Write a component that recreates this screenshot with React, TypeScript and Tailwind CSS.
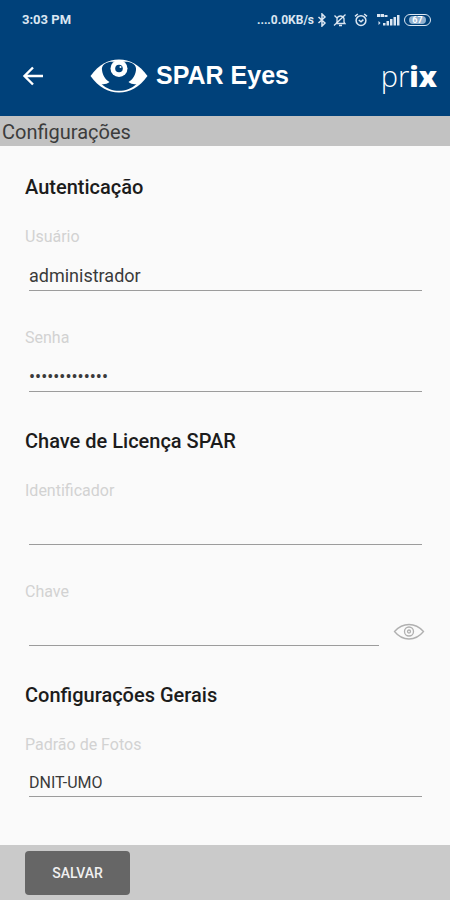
import React, { useState } from 'react';

const inputClass =
  'block h-[42px] w-full appearance-none rounded-none border-b border-[#9c9c9c] bg-transparent pt-3 text-lg leading-6 text-[#3a3a3a] outline-none';

interface FieldProps {
  id: string;
  label: string;
  children: React.ReactNode;
}

const Field: React.FC<FieldProps> = ({ id, label, children }) => (
  <div>
    <label htmlFor={id} className="block text-base leading-6 text-[#d2d2d2]">
      {label}
    </label>
    <div className="mr-[3px] ml-1">{children}</div>
  </div>
);

const SectionTitle: React.FC<{ children: React.ReactNode }> = ({ children }) => (
  <h2 className="mb-[26px] text-xl leading-6 font-medium text-[#1c1c1c]">{children}</h2>
);

const StatusBar: React.FC = () => (
  <div className="flex h-10 items-center justify-between pr-[19px] pl-[22px] text-[#dbe6f2]">
    <span className="text-[13px] font-bold">3:03 PM</span>
    <div className="flex items-center">
      <span className="text-xs font-bold">....0.0KB/s</span>

      {/* Bluetooth */}
      <svg viewBox="0 0 10 14" className="ml-[3px] h-[14px] w-[10px]" fill="none" stroke="currentColor" strokeWidth="1.5">
        <path d="M1.5 4 L8 10 L5 13 V1 L8 4 L1.5 10" />
      </svg>

      {/* Muted bell */}
      <svg viewBox="0 0 14 14" className="ml-1.5 h-[14px] w-[14px]" fill="none" stroke="currentColor" strokeWidth="1.3">
        <path d="M3 10.5 H12 L11 9 V5.5 A3.7 3.7 0 0 0 4 5.5 V9 Z M6 12.5 H9 M1.5 2.5 L4 5 M1 12.5 L12.5 1.5" />
      </svg>

      {/* Alarm clock */}
      <svg viewBox="0 0 14 14" className="ml-[7px] h-[14px] w-[14px]" fill="none" stroke="currentColor" strokeWidth="1.5">
        <circle cx="7" cy="7.6" r="4.9" />
        <path d="M1 3.4 L3.8 1 M13 3.4 L10.2 1 M4.8 7 L7 8.8 L9.4 6.6" />
      </svg>

      {/* Signal */}
      <svg viewBox="0 0 24 14" className="ml-2 h-[14px] w-6" fill="currentColor">
        <path d="M1 1 H4.5 V4 H1 Z M5 1 H8 V4 H5 Z M8.5 2 H11.5 V4 H8.5 Z M2.5 8 L4.5 10 L2.5 12 Z" />
        <path d="M7 10 H9.5 V12.5 H7 Z M10.5 8 H13 V12.5 H10.5 Z M14 6 H16.5 V12.5 H14 Z M17.5 4 H20 V12.5 H17.5 Z M21 2 H23.5 V12.5 H21 Z" />
      </svg>

      {/* Battery */}
      <div className="ml-1 flex h-3 w-[27px] items-center justify-center rounded-full border border-[#dbe6f2]">
        <span className="rounded-sm bg-[#8fb0cf] px-[3px] text-[9px] leading-[8px] font-bold text-white">67</span>
      </div>
    </div>
  </div>
);

const EyeLogo: React.FC = () => (
  <svg viewBox="0 0 58 34" className="h-[34px] w-[58px]" aria-hidden="true">
    <path d="M0.5 17 C9 5.5 18 0.5 29 0.5 S49 5.5 57.5 17 C49 28.5 40 33.5 29 33.5 S9 28.5 0.5 17 Z" fill="#fff" />
    <path
      d="M20 2.8 C13 4.5 11.5 8 12 11 C12.8 17 15.5 20.5 19.5 23 C17 25 14 25.5 11.5 25 C17 30 22.5 31.8 29 31.8 S41 30 46.5 25 C44 25.5 41 25 38.5 23 C42.5 20.5 45.2 17 46 11 C46.5 8 45 4.5 38 2.8 Z"
      fill="#00417a"
    />
    <circle cx="29" cy="9.5" r="8.5" fill="#fff" />
    <circle cx="29" cy="9.5" r="3.8" fill="#00417a" />
    <circle cx="30.5" cy="8" r="1" fill="#fff" />
  </svg>
);

export default function App() {
  const [user, setUser] = useState('administrador');
  const [password, setPassword] = useState('administrador');
  const [identifier, setIdentifier] = useState('');
  const [licenseKey, setLicenseKey] = useState('');
  const [showKey, setShowKey] = useState(false);

  return (
    <div className="flex min-h-screen flex-col bg-[#fafafa] font-[Roboto,sans-serif]">
      <header className="bg-[#00417a] text-white">
        <StatusBar />
        <div className="flex h-[76px] items-center pr-[13px] pb-1 pl-[22px]">
          <button type="button" aria-label="Voltar" className="mr-[46px]">
            <svg viewBox="0 0 22 20" className="h-5 w-[22px]" fill="none" stroke="currentColor" strokeWidth="2.4">
              <path d="M21 10 H3 M11 1.5 L2.5 10 L11 18.5" />
            </svg>
          </button>
          <EyeLogo />
          <span className="ml-2 font-['Liberation_Sans',sans-serif] text-[25px] font-bold">SPAR Eyes</span>
          <span className="ml-auto font-['Open_Sans',sans-serif] text-[29px] leading-9 font-light">
            pr<span className="font-extrabold">ix</span>
          </span>
        </div>
      </header>

      <h1 className="h-[30px] bg-[#c2c2c2] pl-0.5 text-xl leading-[32px] text-[#3c3c3c]">Configurações</h1>

      <main className="flex grow flex-col gap-[37px] px-[25px] pt-[29px] pb-12">
        <section>
          <SectionTitle>Autenticação</SectionTitle>
          <div className="flex flex-col gap-[35px]">
            <Field id="user" label="Usuário">
              <input id="user" type="text" className={inputClass} value={user} onChange={e => setUser(e.target.value)} />
            </Field>
            <Field id="password" label="Senha">
              <input id="password" type="password" className={inputClass} value={password} onChange={e => setPassword(e.target.value)} />
            </Field>
          </div>
        </section>

        <section>
          <SectionTitle>Chave de Licença SPAR</SectionTitle>
          <div className="flex flex-col gap-[35px]">
            <Field id="identifier" label="Identificador">
              <input id="identifier" type="text" className={inputClass} value={identifier} onChange={e => setIdentifier(e.target.value)} />
            </Field>
            <Field id="license-key" label="Chave">
              <div className="-mr-[3px] flex items-end">
                <input
                  id="license-key"
                  type={showKey ? 'text' : 'password'}
                  className={inputClass}
                  value={licenseKey}
                  onChange={e => setLicenseKey(e.target.value)}
                />
                <button type="button" aria-label="Mostrar chave" className="mb-1 ml-[14px] shrink-0" onClick={() => setShowKey(!showKey)}>
                  <svg viewBox="0 0 32 20" className="h-5 w-8" fill="none" stroke="#b0b0b0" strokeWidth="1.3">
                    <path d="M1.5 9.5 C6 4.5 10.5 2.5 16 2.5 S26 4.5 30.5 9.5 C26 15 21.5 17 16 17 S6 15 1.5 9.5 Z" />
                    <circle cx="16" cy="9.5" r="4.5" />
                    <circle cx="16" cy="9.5" r="1.5" />
                  </svg>
                </button>
              </div>
            </Field>
          </div>
        </section>

        <section>
          <SectionTitle>Configurações Gerais</SectionTitle>
          <Field id="photo-pattern" label="Padrão de Fotos">
            <select
              id="photo-pattern"
              className="block h-10 w-full appearance-none rounded-none border-b border-[#9c9c9c] bg-transparent pt-3 text-base leading-6 text-[#3a3a3a] outline-none"
            >
              <option>DNIT-UMO</option>
            </select>
          </Field>
        </section>
      </main>

      <footer className="bg-[#cacaca] px-[25px] pt-1.5 pb-[5px]">
        <button type="button" className="h-11 w-[105px] rounded-sm bg-[#666] text-sm font-medium text-[#f0f0f0]">
          SALVAR
        </button>
      </footer>
    </div>
  );
}
